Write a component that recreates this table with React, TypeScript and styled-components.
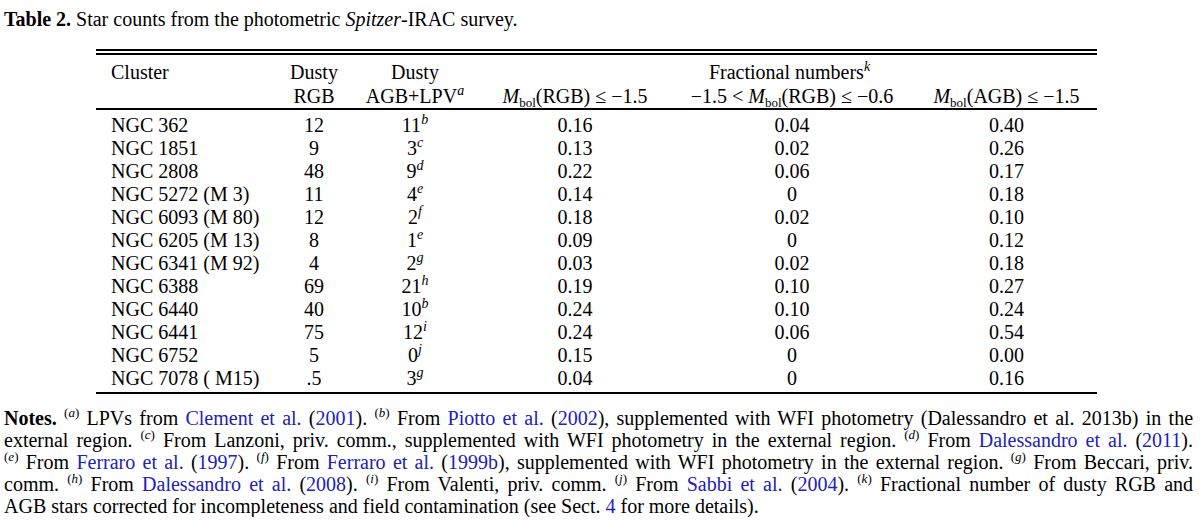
import React from "react";
import styled, { createGlobalStyle } from "styled-components";

const Global = createGlobalStyle`
  html, body { margin: 0; padding: 0; background: #fff; }
  body {
    font-family: "Liberation Serif", "Times New Roman", serif;
    color: #000;
  }
`;

const Page = styled.div`
  width: 1200px;
  box-sizing: border-box;
  padding: 8px 7px 0 4px;
`;

const Caption = styled.div`
  font-size: 20px;
  line-height: 22px;
`;

const Bold = styled.b`
  font-weight: 700;
`;

const Ital = styled.i`
  font-style: italic;
`;

const TableBlock = styled.div`
  width: 1001px;
  margin: 19px 0 0 92px;
  display: flex;
  flex-direction: column;
`;

const DoubleRule = styled.div`
  height: 2px;
  border-top: 2px solid #000;
  border-bottom: 2px solid #000;
`;

const Rule = styled.div`
  height: 2px;
  background: #000;
`;

const cols = "184px 68px 134px 186px 248px 181px";

const HeaderGrid = styled.div`
  display: grid;
  grid-template-columns: ${cols};
  grid-auto-rows: 24px;
  padding-top: 5px;
  font-size: 20px;
  line-height: 24px;
`;

const BodyGrid = styled.div`
  display: grid;
  grid-template-columns: ${cols};
  grid-auto-rows: 23px;
  padding: 4px 0 2px;
  font-size: 20px;
  line-height: 23px;
`;

const Cell = styled.div<{ $first?: boolean; $span?: number }>`
  text-align: ${(p) => (p.$first ? "left" : "center")};
  padding-left: ${(p) => (p.$first ? "15px" : "0")};
  white-space: nowrap;
  ${(p) => (p.$span ? `grid-column: span ${p.$span};` : "")}
`;

const Sup = styled.sup`
  font-size: 14px;
  font-style: italic;
  line-height: 0;
  vertical-align: 8px;
`;

const Sub = styled.sub`
  font-size: 13px;
  line-height: 0;
  vertical-align: -4px;
`;

const Notes = styled.p`
  margin: 13px 0 0;
  font-size: 20px;
  line-height: 22px;
  text-align: justify;
`;

const NoteMark = styled.sup`
  font-size: 13px;
  line-height: 0;
  vertical-align: 8px;
`;

const Link = styled.span`
  color: #2121b8;
`;

const Mbol = () => (
  <>
    <Ital>M</Ital>
    <Sub>bol</Sub>
  </>
);

const Mark = ({ l }: { l: string }) => (
  <NoteMark>
    (<Ital>{l}</Ital>)
  </NoteMark>
);

type Row = [string, string, string, string, string, string, string];

const rows: Row[] = [
  ["NGC 362", "12", "11", "b", "0.16", "0.04", "0.40"],
  ["NGC 1851", "9", "3", "c", "0.13", "0.02", "0.26"],
  ["NGC 2808", "48", "9", "d", "0.22", "0.06", "0.17"],
  ["NGC 5272 (M 3)", "11", "4", "e", "0.14", "0", "0.18"],
  ["NGC 6093 (M 80)", "12", "2", "f", "0.18", "0.02", "0.10"],
  ["NGC 6205 (M 13)", "8", "1", "e", "0.09", "0", "0.12"],
  ["NGC 6341 (M 92)", "4", "2", "g", "0.03", "0.02", "0.18"],
  ["NGC 6388", "69", "21", "h", "0.19", "0.10", "0.27"],
  ["NGC 6440", "40", "10", "b", "0.24", "0.10", "0.24"],
  ["NGC 6441", "75", "12", "i", "0.24", "0.06", "0.54"],
  ["NGC 6752", "5", "0", "j", "0.15", "0", "0.00"],
  ["NGC 7078 ( M15)", ".5", "3", "g", "0.04", "0", "0.16"],
];

const Ref = ({ name, year }: { name: string; year: string }) => (
  <>
    <Link>{name}</Link> (<Link>{year}</Link>)
  </>
);

const NB = "\u00a0";

export default function App() {
  return (
    <Page>
      <Global />
      <Caption>
        <Bold>Table 2.</Bold> Star counts from the photometric <Ital>Spitzer</Ital>-IRAC survey.
      </Caption>
      <TableBlock>
        <DoubleRule />
        <HeaderGrid>
          <Cell $first>Cluster</Cell>
          <Cell>Dusty</Cell>
          <Cell>Dusty</Cell>
          <Cell $span={3}>
            Fractional numbers<Sup>k</Sup>
          </Cell>
          <Cell $first />
          <Cell>RGB</Cell>
          <Cell>
            AGB+LPV<Sup>a</Sup>
          </Cell>
          <Cell>
            <Mbol />(RGB) ≤ −1.5
          </Cell>
          <Cell>
            −1.5 &lt; <Mbol />(RGB) ≤ −0.6
          </Cell>
          <Cell>
            <Mbol />(AGB) ≤ −1.5
          </Cell>
        </HeaderGrid>
        <Rule />
        <BodyGrid>
          {rows.map((r) => (
            <React.Fragment key={r[0]}>
              <Cell $first>{r[0]}</Cell>
              <Cell>{r[1]}</Cell>
              <Cell>
                {r[2]}
                <Sup>{r[3]}</Sup>
              </Cell>
              <Cell>{r[4]}</Cell>
              <Cell>{r[5]}</Cell>
              <Cell>{r[6]}</Cell>
            </React.Fragment>
          ))}
        </BodyGrid>
        <Rule />
      </TableBlock>
      <Notes>
        <Bold>Notes.</Bold> <Mark l="a" />{NB}LPVs from <Ref name="Clement et al." year="2001" />.{" "}
        <Mark l="b" />{NB}From <Ref name="Piotto et al." year="2002" />, supplemented with WFI
        photometry (Dalessandro et al. 2013b) in the external region. <Mark l="c" />{NB}From
        Lanzoni, priv. comm., supplemented with WFI photometry in the external region.{" "}
        <Mark l="d" />{NB}From <Ref name="Dalessandro et al." year="2011" />.{" "}
        <Mark l="e" />{NB}From <Ref name="Ferraro et al." year="1997" />.{" "}
        <Mark l="f" />{NB}From <Ref name="Ferraro et al." year="1999b" />, supplemented with WFI
        photometry in the external region. <Mark l="g" />{NB}From Beccari, priv. comm.{" "}
        <Mark l="h" />{NB}From <Ref name="Dalessandro et al." year="2008" />.{" "}
        <Mark l="i" />{NB}From Valenti, priv. comm. <Mark l="j" />{NB}From{" "}
        <Ref name="Sabbi et al." year="2004" />. <Mark l="k" />{NB}Fractional number of dusty RGB
        and AGB{NB}stars corrected for incompleteness and field contamination (see Sect.{" "}
        <Link>4</Link> for more details).
      </Notes>
    </Page>
  );
}
